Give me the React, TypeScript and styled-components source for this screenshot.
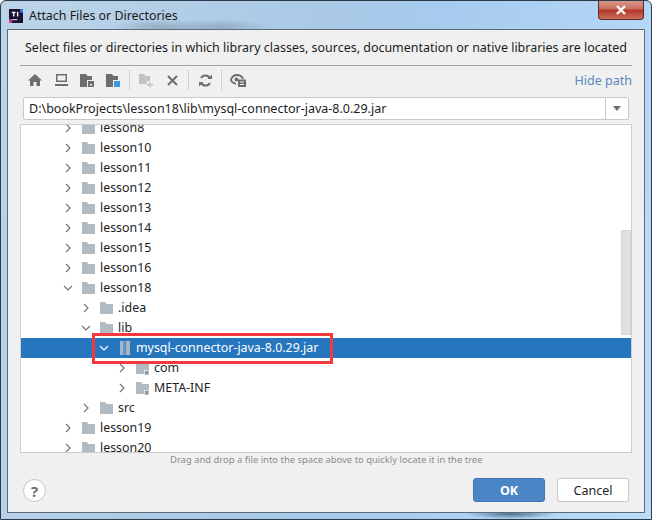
import React from 'react';
import styled, { createGlobalStyle } from 'styled-components';

const GlobalStyle = createGlobalStyle`
  html, body {
    margin: 0;
    padding: 0;
    background: #fff;
  }
  body {
    font-family: "Noto Sans", "Open Sans", sans-serif;
    font-size: 13px;
  }
`;

const Win = styled.div`
  box-sizing: border-box;
  width: 652px;
  height: 520px;
  display: flex;
  flex-direction: column;
  border: 1px solid #2b3a48;
  border-radius: 6px 6px 0 0;
  padding: 0 6px 6px;
  position: relative;
  overflow: hidden;
  background:
    radial-gradient(ellipse 50px 8px at 160px 26px, rgba(90, 110, 130, 0.35), transparent),
    radial-gradient(ellipse 50px 8px at 220px 26px, rgba(90, 110, 130, 0.35), transparent),
    radial-gradient(ellipse 45px 5px at 510px 513px, rgba(40, 70, 100, 0.7), transparent),
    linear-gradient(100deg, #bcd4e8 0%, #a9c9e6 45%, #a6cbee 60%, #bcdcfa 100%);
`;

const TitleBar = styled.div`
  height: 28px;
  flex: none;
  display: flex;
  align-items: center;
  gap: 6px;
  padding-left: 2px;
`;

const TitleLogo = styled.svg`
  width: 14px;
  height: 14px;
  margin-top: 1px;
`;

const TitleText = styled.span`
  font-size: 12.4px;
  color: #1a1a1a;
`;

const CloseBtn = styled.div`
  position: absolute;
  top: -1px;
  right: 7px;
  width: 46px;
  height: 20px;
  box-sizing: border-box;
  border: 1px solid #5e2a24;
  border-top: none;
  border-radius: 0 0 4px 4px;
  display: flex;
  align-items: center;
  justify-content: center;
  background: linear-gradient(#d99b8f 0%, #c9705f 45%, #b2392a 55%, #c9705f 100%);
`;

const Panel = styled.div`
  flex: 1;
  min-height: 0;
  display: flex;
  flex-direction: column;
  background: #f0f0f0;
  border: 1px solid #5c6c7a;
  padding: 0 12px 10px;
`;

const Message = styled.div`
  height: 35px;
  flex: none;
  display: flex;
  align-items: center;
  padding-left: 5px;
  border-bottom: 1px solid #a5a5a5;
  color: #1c1c1c;
  font-size: 12.47px;
  white-space: nowrap;
`;

const Toolbar = styled.div`
  height: 28px;
  flex: none;
  margin-bottom: 3px;
  display: flex;
  align-items: center;
  padding-left: 2px;
`;

const ToolBtn = styled.div`
  width: 26px;
  height: 24px;
  display: flex;
  align-items: center;
  justify-content: center;
`;

const ToolSep = styled.div`
  width: 1px;
  height: 20px;
  background: #cfcfcf;
  margin: 0 3px;
`;

const HidePath = styled.a`
  margin-left: auto;
  color: #5a88bb;
  font-size: 12.5px;
`;

const PathRow = styled.div`
  box-sizing: border-box;
  height: 23px;
  flex: none;
  margin: 0 3px;
  display: flex;
  background: #fff;
  border: 1px solid #c9c9c9;
  border-radius: 2px;
`;

const PathText = styled.div`
  flex: 1;
  padding-left: 5px;
  line-height: 21px;
  font-size: 12.5px;
  color: #1c1c1c;
`;

const PathArrow = styled.div`
  width: 22px;
  border-left: 1px solid #c9c9c9;
  display: flex;
  align-items: center;
  justify-content: center;
  &::after {
    content: '';
    border-left: 4px solid transparent;
    border-right: 4px solid transparent;
    border-top: 5px solid #6e6e6e;
  }
`;

const Tree = styled.div`
  box-sizing: border-box;
  height: 329px;
  flex: none;
  margin-top: 4px;
  background: #fff;
  border: 1px solid #cdcdcd;
  position: relative;
  overflow: hidden;
`;

const TreeRows = styled.div`
  margin-top: -7px;
`;

const Row = styled.div<{ $depth: number; $selected?: boolean }>`
  height: 20px;
  display: flex;
  align-items: center;
  padding-left: ${(p) => 42 + p.$depth * 18}px;
  background: ${(p) => (p.$selected ? '#2675bf' : 'transparent')};
  color: ${(p) => (p.$selected ? '#fff' : '#1c1c1c')};
  font-size: 12.4px;
  white-space: nowrap;
`;

const Chevron = styled.svg`
  width: 10px;
  height: 10px;
  flex: none;
  margin-right: 4px;
`;

const RowIcon = styled.svg`
  width: 18px;
  height: 14px;
  flex: none;
  margin-right: 5px;
`;

const RowLabel = styled.span`
  margin-top: -1px;
`;

const Thumb = styled.div`
  position: absolute;
  right: 0;
  top: 105px;
  width: 10px;
  height: 105px;
  background: #e0e0e0;
  border: 1px solid #d6d6d6;
  box-sizing: border-box;
`;

const RedMark = styled.div`
  position: absolute;
  left: 71px;
  top: 208px;
  width: 241px;
  height: 31px;
  box-sizing: border-box;
  border: 3px solid #f03a3e;
`;

const Hint = styled.div`
  height: 17px;
  flex: none;
  padding-left: 150px;
  font-size: 9.45px;
  line-height: 14px;
  color: #8c8c8c;
  white-space: nowrap;
`;

const Footer = styled.div`
  flex: 1;
  display: flex;
  align-items: flex-end;
  padding: 0 3px;
`;

const Help = styled.div`
  box-sizing: border-box;
  width: 23px;
  height: 23px;
  border-radius: 50%;
  background: #fff;
  border: 1px solid #c4c4c4;
  color: #6e6e6e;
  font-weight: 700;
  font-size: 15px;
  display: flex;
  align-items: center;
  justify-content: center;
`;

const Buttons = styled.div`
  margin-left: auto;
  display: flex;
  gap: 12px;
`;

const Button = styled.div<{ $primary?: boolean }>`
  box-sizing: border-box;
  width: 72px;
  height: 24px;
  border-radius: 3px;
  display: flex;
  align-items: center;
  justify-content: center;
  font-size: 12.5px;
  font-weight: ${(p) => (p.$primary ? 700 : 400)};
  color: ${(p) => (p.$primary ? '#fff' : '#1c1c1c')};
  background: ${(p) => (p.$primary ? '#4a86c5' : '#fff')};
  border: 1px solid ${(p) => (p.$primary ? '#3f78b4' : '#c9c9c9')};
`;

type Item = { name: string; depth: number; open?: boolean; selected?: boolean; kind?: 'jar' | 'pkg' };

const items: Item[] = [
  { name: 'lesson8', depth: 0 },
  { name: 'lesson10', depth: 0 },
  { name: 'lesson11', depth: 0 },
  { name: 'lesson12', depth: 0 },
  { name: 'lesson13', depth: 0 },
  { name: 'lesson14', depth: 0 },
  { name: 'lesson15', depth: 0 },
  { name: 'lesson16', depth: 0 },
  { name: 'lesson18', depth: 0, open: true },
  { name: '.idea', depth: 1 },
  { name: 'lib', depth: 1, open: true },
  { name: 'mysql-connector-java-8.0.29.jar', depth: 2, open: true, selected: true, kind: 'jar' },
  { name: 'com', depth: 3, kind: 'pkg' },
  { name: 'META-INF', depth: 3, kind: 'pkg' },
  { name: 'src', depth: 1 },
  { name: 'lesson19', depth: 0 },
  { name: 'lesson20', depth: 0 },
];

const Folder = () => (
  <RowIcon viewBox="0 0 18 14">
    <path d="M5 1h5l1.500 2H18v10H5z" fill="#b0bbc3" />
  </RowIcon>
);

const PkgFolder = () => (
  <RowIcon viewBox="0 0 18 14">
    <path d="M5 1h5l1.500 2H18v10H5z" fill="#b0bbc3" />
    <rect x="13.500" y="9.500" width="4.500" height="4.500" fill="#8f9ba5" stroke="#fff" strokeWidth="0.6" />
  </RowIcon>
);

const Jar = () => (
  <RowIcon viewBox="0 0 18 14">
    <rect x="7" y="0" width="3" height="14" fill="#a9b6bf" />
    <path d="M10 0h3l-.8 2 .8 2-.8 2 .8 2-.8 2 .8 2-.8 2H10z" fill="#5e9bd0" />
    <rect x="13" y="0" width="4" height="14" fill="#a9b6bf" />
  </RowIcon>
);

export default function App() {
  return (
    <>
      <GlobalStyle />
      <Win>
        <TitleBar>
          <TitleLogo viewBox="0 0 15 15">
            <rect width="15" height="15" fill="#1b1030" />
            <rect x="0" y="11" width="3" height="4" fill="#e0389a" />
            <rect x="12" y="0" width="3" height="4" fill="#2a7ae0" />
            <rect x="3" y="3" width="4" height="1.500" fill="#fff" />
            <rect x="4.300" y="3" width="1.500" height="5" fill="#fff" />
            <rect x="8.500" y="3" width="1.500" height="5" fill="#fff" />
            <rect x="3" y="11" width="6" height="1" fill="#fff" />
          </TitleLogo>
          <TitleText>Attach Files or Directories</TitleText>
        </TitleBar>
        <CloseBtn>
          <svg width="12" height="10" viewBox="0 0 12 10">
            <path d="M2 1l8 8M10 1L2 9" stroke="#fff" strokeWidth="2.4" />
          </svg>
        </CloseBtn>
        <Panel>
          <Message>Select files or directories in which library classes, sources, documentation or native libraries are located</Message>
          <Toolbar>
            <ToolBtn>
              <svg width="14" height="12" viewBox="0 0 14 12"><path d="M7 0L0 6.500h2V12h3.500V8h3v4H12V6.500h2z" fill="#6e6e6e" /></svg>
            </ToolBtn>
            <ToolBtn>
              <svg width="13" height="12" viewBox="0 0 13 12"><path d="M1 0h11v8H1zM2.500 1.500v5h8v-5zM0 10h13v2H0z" fill="#6e6e6e" fillRule="evenodd" /></svg>
            </ToolBtn>
            <ToolBtn>
              <svg width="14" height="13" viewBox="0 0 14 13"><path d="M0 0h6l1.500 2H12v4H7v7H0z" fill="#6e6e6e" /><path d="M8 7h6v6H8zM10 10h2v1.500h-2z" fill="#6e6e6e" fillRule="evenodd" /></svg>
            </ToolBtn>
            <ToolBtn>
              <svg width="14" height="13" viewBox="0 0 14 13"><path d="M0 0h6l1.500 2H12v4H7v7H0z" fill="#6e6e6e" /><rect x="8" y="7" width="6" height="6" fill="#3a9bdc" /></svg>
            </ToolBtn>
            <ToolSep />
            <ToolBtn>
              <svg width="14" height="13" viewBox="0 0 14 13"><path d="M0 0h5l1.500 2H11v5H8v3H0z" fill="#c2c2c2" /><path d="M10 8h1.500v2H14v1.500h-2.500V13H10v-1.500H8V10h2z" fill="#c2c2c2" /></svg>
            </ToolBtn>
            <ToolBtn>
              <svg width="11" height="11" viewBox="0 0 11 11"><path d="M1 1l9 9M10 1l-9 9" stroke="#6e6e6e" strokeWidth="2" /></svg>
            </ToolBtn>
            <ToolSep />
            <ToolBtn>
              <svg width="13" height="13" viewBox="0 0 13 13" fill="none"><path d="M11 4.500A5 5 0 0 0 2 4M2 8.500A5 5 0 0 0 11 9" stroke="#6e6e6e" strokeWidth="2" /><path d="M8.500 5H13V.5zM4.500 8H0v4.500z" fill="#6e6e6e" /></svg>
            </ToolBtn>
            <ToolSep />
            <ToolBtn>
              <svg width="17" height="14" viewBox="0 0 17 14" fill="none"><path d="M6 11C3 10 1 8 1 6.500 2 4 4.500 2 7 2s5 1.500 6 4" stroke="#6e6e6e" strokeWidth="1.800" /><circle cx="6.500" cy="6.500" r="2" fill="#6e6e6e" /><path d="M8 6.500h8V14H8z" fill="#6e6e6e" /><path d="M10 9h4M10 11.500h4" stroke="#f0f0f0" /></svg>
            </ToolBtn>
            <HidePath>Hide path</HidePath>
          </Toolbar>
          <PathRow>
            <PathText>D:\bookProjects\lesson18\lib\mysql-connector-java-8.0.29.jar</PathText>
            <PathArrow />
          </PathRow>
          <Tree>
            <TreeRows>
              {items.map((it) => (
                <Row key={it.name} $depth={it.depth} $selected={it.selected}>
                  <Chevron viewBox="0 0 10 10" fill="none" stroke={it.selected ? '#fff' : '#777'} strokeWidth="1.200">
                    {it.open ? <path d="M1 3l4 4 4-4" /> : <path d="M3 1l4 4-4 4" />}
                  </Chevron>
                  {it.kind === 'jar' ? <Jar /> : it.kind === 'pkg' ? <PkgFolder /> : <Folder />}
                  <RowLabel>{it.name}</RowLabel>
                </Row>
              ))}
            </TreeRows>
            <Thumb />
            <RedMark />
          </Tree>
          <Hint>Drag and drop a file into the space above to quickly locate it in the tree</Hint>
          <Footer>
            <Help>?</Help>
            <Buttons>
              <Button $primary>OK</Button>
              <Button>Cancel</Button>
            </Buttons>
          </Footer>
        </Panel>
      </Win>
    </>
  );
}
